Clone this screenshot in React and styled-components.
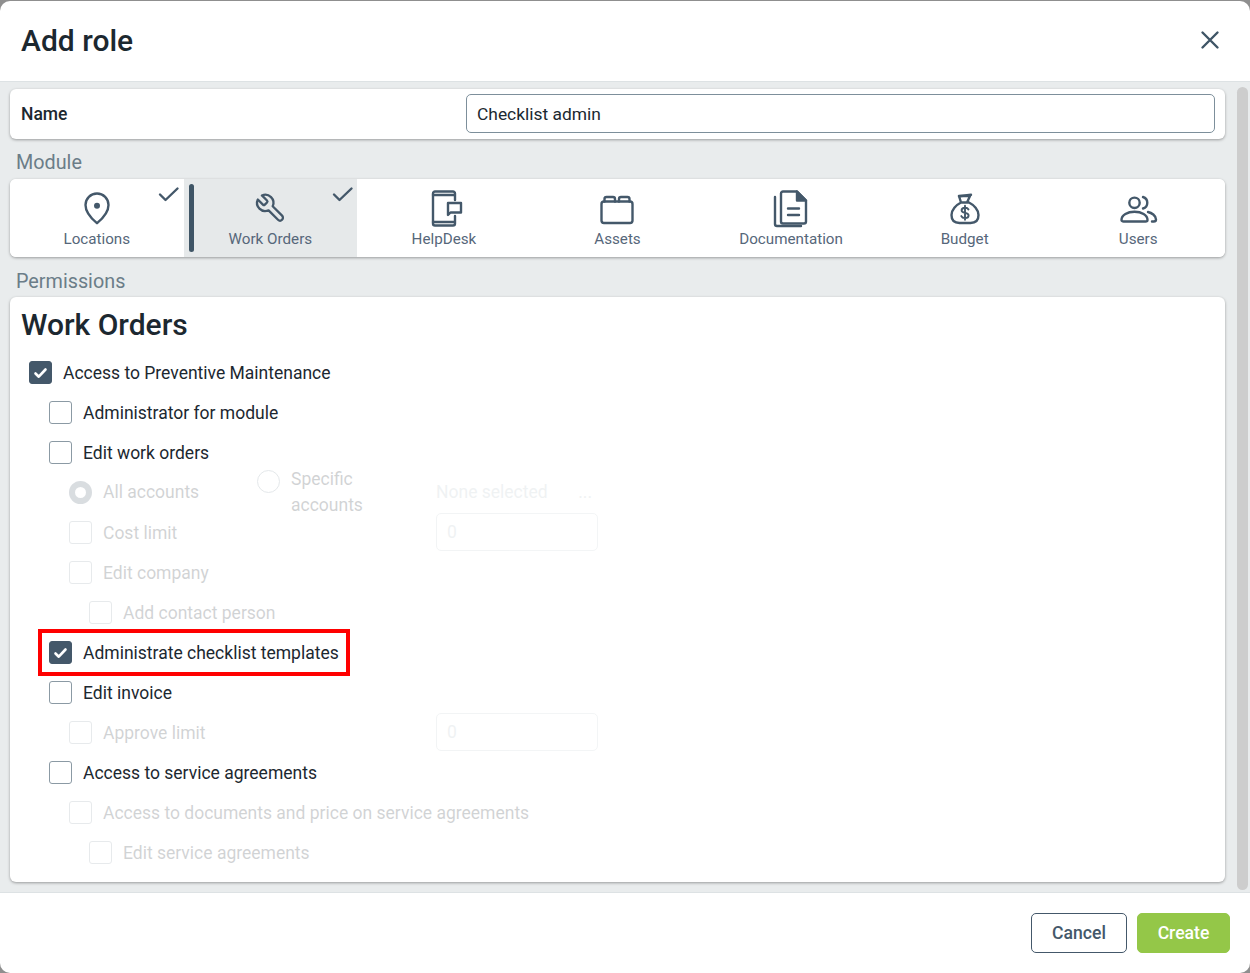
import React from 'react';
import styled, { createGlobalStyle } from 'styled-components';

const GlobalStyle = createGlobalStyle`
	html, body {
		margin: 0;
		padding: 0;
		background: #8f8f8f;
		font-family: Roboto, "Liberation Sans", sans-serif;
	}
	* {
		box-sizing: border-box;
	}
`;

const Modal = styled.div`
	width: 1250px;
	margin-top: 1px;
	height: 972px;
	background: #fff;
	border-radius: 10px;
	display: flex;
	flex-direction: column;
	overflow: hidden;
`;

const Header = styled.header`
	height: 81px;
	flex: none;
	display: flex;
	align-items: center;
	justify-content: space-between;
	padding: 0 30px 2px 21px;
	border-bottom: 1px solid #dde2e4;
`;

const Title = styled.h1`
	margin: 2px 0 0;
	font-size: 30px;
	line-height: 36px;
	font-weight: 500;
	color: #1c2830;
`;

const CloseButton = styled.button`
	width: 20px;
	height: 20px;
	padding: 0;
	border: 0;
	background: none;
	display: flex;
`;

const Body = styled.div`
	flex: 1;
	min-height: 0;
	display: flex;
	background: #e9eced;
	border-bottom: 1px solid #dde2e4;
`;

const Content = styled.div`
	width: 1235px;
	flex: none;
	padding: 7px 0 0 10px;
	display: flex;
	flex-direction: column;
`;

const ScrollThumb = styled.div`
	width: 11px;
	height: 803px;
	margin: 5px 0 0 2px;
	border-radius: 6px;
	background: #cdcdcd;
`;

const Card = styled.section`
	width: 1215px;
	background: #fff;
	border-radius: 6px;
	box-shadow: 0 1px 3px rgba(0, 0, 0, 0.35);
`;

const NameCard = styled(Card)`
	height: 50px;
	display: flex;
	align-items: center;
	padding: 0 10px 1px 11px;
`;

const NameLabel = styled.label`
	width: 445px;
	font-size: 17.5px;
	font-weight: 500;
	color: #1c2830;
`;

const NameInput = styled.div`
	width: 749px;
	height: 39px;
	display: flex;
	align-items: center;
	padding: 0 10px;
	border: 1px solid #7d8f9b;
	border-radius: 5px;
	font-size: 17.4px;
	color: #1c2830;
`;

const SectionLabel = styled.div`
	height: 40px;
	padding: ${p => p.$top}px 0 0 6px;
	font-size: 19.8px;
	line-height: 22px;
	color: #6b7d88;
`;

const ModuleCard = styled(Card)`
	height: 78px;
	display: grid;
	grid-template-columns: repeat(7, 1fr);
	overflow: hidden;
`;

const ModuleTab = styled.div`
	position: relative;
	height: 78px;
	display: flex;
	flex-direction: column;
	align-items: center;
	padding-top: 9px;
	background: ${p => (p.$active ? '#e6e9ea' : '#fff')};
	color: #44586a;

	svg {
		display: block;
	}
`;

const ActiveBar = styled.span`
	position: absolute;
	left: 5px;
	top: 5px;
	width: 5px;
	height: 68px;
	border-radius: 3px;
	background: #3f5566;
`;

const TabCheck = styled.svg`
	position: absolute;
	right: 3.5px;
	top: 6px;
`;

const TabLabel = styled.span`
	font-size: 15.2px;
	line-height: 22px;
	color: #56677a;
`;

const PermissionsCard = styled(Card)`
	height: 585px;
	padding: 9px 11px 0;
`;

const CardTitle = styled.h2`
	margin: 0 0 9px;
	font-size: 30px;
	line-height: 38px;
	font-weight: 500;
	color: #1c2830;
`;

const List = styled.div`
	margin-left: 8px;
`;

const Row = styled.div`
	height: 40px;
	display: flex;
	align-items: center;
	gap: 11px;
	padding-left: ${p => p.$level * 20}px;
	opacity: ${p => (p.$disabled ? 0.2 : 1)};
`;

const Highlight = styled.div`
	flex: none;
	margin: 0 0 1px -11px;
	height: 47px;
	width: 312px;
	border: 4px solid #f00;
	display: flex;
	align-items: center;
	gap: 11px;
	padding: 1px 0 0 7px;
	white-space: nowrap;
`;

const Box = styled.span`
	width: 23px;
	height: 23px;
	margin-bottom: 1px;
	flex: none;
	display: flex;
	align-items: center;
	justify-content: center;
	border-radius: 3px;
	border: 1px solid ${p => (p.$checked ? '#44586a' : '#8b9aa4')};
	background: ${p => (p.$checked ? '#44586a' : '#fff')};
`;

const Text = styled.span`
	font-size: 17.5px;
	line-height: 24px;
	color: #1c2830;
`;

const LimitGrid = styled.div`
	display: grid;
	grid-template-columns: 367px 162px;
	align-items: center;
	height: 40px;
	padding-left: ${p => p.$level * 20}px;
	opacity: 0.2;
`;

const LimitLabel = styled.div`
	display: flex;
	align-items: center;
	gap: 11px;
`;

const LimitInput = styled.div`
	height: 38px;
	margin-bottom: 2px;
	display: flex;
	align-items: center;
	padding: 0 10px;
	border: 1px solid #c3ccd1;
	border-radius: 5px;
	font-size: 17.5px;
	color: #b4bfc6;
`;

const RadioRow = styled.div`
	height: 40px;
	display: grid;
	grid-template-columns: 188px 179px 162px;
	grid-template-rows: 38px;
	align-items: center;
	padding-left: 40px;
	opacity: 0.2;
`;

const RadioOption = styled.div`
	display: flex;
	align-items: center;
	gap: 11px;
`;

const SpecificOption = styled(RadioOption)`
	align-self: start;
	align-items: flex-start;
	margin-top: -3px;
`;

const Radio = styled.span`
	width: 23px;
	height: 23px;
	flex: none;
	border-radius: 50%;
	border: ${p => (p.$checked ? '6px solid #44586a' : '1px solid #7d8f9b')};
	background: #fff;
`;

const SpecificText = styled(Text)`
	width: 80px;
	line-height: 26px;
	margin-top: -4px;
`;

const NoneSelected = styled.div`
	display: flex;
	justify-content: space-between;
	padding-right: 6px;
	font-size: 17.5px;
	color: #b4bfc6;
`;

const Footer = styled.footer`
	height: 80px;
	flex: none;
	display: flex;
	justify-content: flex-end;
	align-items: center;
	gap: 10px;
	padding: 0 20px 0 0;
`;

const Button = styled.button`
	height: 40px;
	border-radius: 5px;
	font-family: inherit;
	font-size: 17.6px;
	font-weight: 500;
	padding: 0;
	width: ${p => (p.$primary ? '93px' : '96px')};
	border: 1px solid ${p => (p.$primary ? '#94c748' : '#44586a')};
	background: ${p => (p.$primary ? '#94c748' : '#fff')};
	color: ${p => (p.$primary ? '#fff' : '#44586a')};
`;

const stroke = {
	fill: 'none',
	stroke: 'currentColor',
	strokeWidth: 2.4,
	strokeLinecap: 'round',
	strokeLinejoin: 'round'
};

const Icon = ({ children }) => (
	<svg width="40" height="40" viewBox="0 0 40 40" {...stroke}>
		{children}
	</svg>
);

const PinIcon = () => (
	<Icon>
		<path d="M20 35.2C18 33.5 8.5 26 8.5 17a11.5 11.5 0 0 1 23 0c0 9-9.5 16.5-11.5 18.2z" />
		<circle cx="20" cy="17.8" r="3" fill="currentColor" stroke="none" />
	</Icon>
);

const WrenchIcon = () => (
	<Icon>
		<g transform="translate(37 4) scale(-1.36 1.36)">
			<path d="M14.7 6.3a1 1 0 0 0 0 1.4l1.6 1.6a1 1 0 0 0 1.4 0l3.77-3.77a6 6 0 0 1-7.94 7.94l-6.91 6.91a2.12 2.12 0 0 1-3-3l6.91-6.91a6 6 0 0 1 7.94-7.94l-3.76 3.76z" strokeWidth="1.7" />
		</g>
	</Icon>
);

const HelpDeskIcon = () => (
	<Icon>
		<path d="M31 12V5.5a2 2 0 0 0-2-2H11a2 2 0 0 0-2 2v30a2 2 0 0 0 2 2h18a2 2 0 0 0 2-2V28" />
		<path d="M9 7h21M9 34h21" />
		<path d="M24 15h13v9.5H26.5L24 27z" fill="#fff" />
	</Icon>
);

const AssetsIcon = () => (
	<Icon>
		<rect x="4.5" y="13.5" width="31" height="21.5" rx="2.5" />
		<path d="M7.5 13.5V11a2 2 0 0 1 2-2h6.5a2 2 0 0 1 2 2v2.5M22 13.5V11a2 2 0 0 1 2-2h6.5a2 2 0 0 1 2 2v2.5" />
	</Icon>
);

const DocIcon = () => (
	<Icon>
		<path d="M4 9v27a2 2 0 0 0 2 2h24" />
		<path d="M10 5.5a2 2 0 0 1 2-2h14l9 9v21a2 2 0 0 1-2 2H12a2 2 0 0 1-2-2z" />
		<path d="M26 3.5l9 9h-9z" fill="currentColor" />
		<path d="M17 20.5h11M17 27h11" />
	</Icon>
);

const BudgetIcon = () => (
	<Icon>
		<path d="M14 8h11l-3 6.5h-6zM16 14.5C11 17 6.5 22 6.5 27c0 5 3 8 8 8h11c5 0 8-3 8-8 0-5-4.5-10-9.5-12.5z" />
		<path d="M14 8.2l12-1.4" />
		<path d="M23.5 21.5c-.6-1.2-1.8-1.8-3.5-1.8-2 0-3.4 1-3.4 2.6 0 3.6 7 1.6 7 5.2 0 1.6-1.5 2.6-3.6 2.6-1.8 0-3.1-.7-3.7-2M20 17.8v14" strokeWidth="1.9" />
	</Icon>
);

const UsersIcon = () => (
	<Icon>
		<circle cx="16.5" cy="14.8" r="5.2" />
		<path d="M25 9a6 6 0 0 1 0 11.5" />
		<path d="M3.5 32c0-5 6-8.3 13-8.3s13 3.3 13 8.3c0 1-1 1.5-2 1.5H5.5c-1 0-2-.5-2-1.5z" />
		<path d="M30 24c3.5.8 8 3.5 8 7.5 0 1.2-1 2-2.2 2H34" />
	</Icon>
);

const MODULES = [
	{ name: 'Locations', icon: PinIcon, done: true },
	{ name: 'Work Orders', icon: WrenchIcon, done: true, active: true },
	{ name: 'HelpDesk', icon: HelpDeskIcon },
	{ name: 'Assets', icon: AssetsIcon },
	{ name: 'Documentation', icon: DocIcon },
	{ name: 'Budget', icon: BudgetIcon },
	{ name: 'Users', icon: UsersIcon }
];

const Tick = () => (
	<svg width="15" height="12" viewBox="0 0 15 12" fill="none" stroke="#fff" strokeWidth="2.6" strokeLinecap="round" strokeLinejoin="round">
		<path d="M2.5 6.5l3.3 3.2 6.7-7.2" />
	</svg>
);

const Check = ({ label, level = 0, checked, disabled }) => (
	<Row $level={level} $disabled={disabled}>
		<Box $checked={checked}>{checked && <Tick />}</Box>
		<Text>{label}</Text>
	</Row>
);

const Limit = ({ label }) => (
	<LimitGrid $level={2}>
		<LimitLabel>
			<Box />
			<Text>{label}</Text>
		</LimitLabel>
		<LimitInput>0</LimitInput>
	</LimitGrid>
);

const App = () => (
	<Modal>
		<GlobalStyle />
		<Header>
			<Title>Add role</Title>
			<CloseButton>
				<svg width="20" height="20" viewBox="0 0 20 20" fill="none" stroke="#3f5566" strokeWidth="2.4" strokeLinecap="round">
					<path d="M2.5 2.5l15 15M17.5 2.5l-15 15" />
				</svg>
			</CloseButton>
		</Header>
		<Body>
			<Content>
				<NameCard>
					<NameLabel>Name</NameLabel>
					<NameInput>Checklist admin</NameInput>
				</NameCard>
				<SectionLabel $top={13}>Module</SectionLabel>
				<ModuleCard>
					{MODULES.map(({ name, icon: ModuleIcon, done, active }) => (
						<ModuleTab key={name} $active={active}>
							{active && <ActiveBar />}
							{done && (
								<TabCheck width="22" height="18" viewBox="0 0 22 18" fill="none" stroke="#44586a" strokeWidth="2.4" strokeLinecap="round" strokeLinejoin="round">
									<path d="M2 9.5l5.5 5.5L19.5 3.5" />
								</TabCheck>
							)}
							<ModuleIcon />
							<TabLabel>{name}</TabLabel>
						</ModuleTab>
					))}
				</ModuleCard>
				<SectionLabel $top={14}>Permissions</SectionLabel>
				<PermissionsCard>
					<CardTitle>Work Orders</CardTitle>
					<List>
						<Check label="Access to Preventive Maintenance" checked />
						<Check label="Administrator for module" level={1} />
						<Check label="Edit work orders" level={1} />
						<RadioRow>
							<RadioOption>
								<Radio $checked />
								<Text>All accounts</Text>
							</RadioOption>
							<SpecificOption>
								<Radio />
								<SpecificText>Specific accounts</SpecificText>
							</SpecificOption>
							<NoneSelected>
								<span>None selected</span>
								<span>...</span>
							</NoneSelected>
						</RadioRow>
						<Limit label="Cost limit" />
						<Check label="Edit company" level={2} disabled />
						<Check label="Add contact person" level={3} disabled />
						<Row $level={1}>
							<Highlight>
								<Box $checked>
									<Tick />
								</Box>
								<Text>Administrate checklist templates</Text>
							</Highlight>
						</Row>
						<Check label="Edit invoice" level={1} />
						<Limit label="Approve limit" />
						<Check label="Access to service agreements" level={1} />
						<Check label="Access to documents and price on service agreements" level={2} disabled />
						<Check label="Edit service agreements" level={3} disabled />
					</List>
				</PermissionsCard>
			</Content>
			<ScrollThumb />
		</Body>
		<Footer>
			<Button>Cancel</Button>
			<Button $primary>Create</Button>
		</Footer>
	</Modal>
);

export default App;
